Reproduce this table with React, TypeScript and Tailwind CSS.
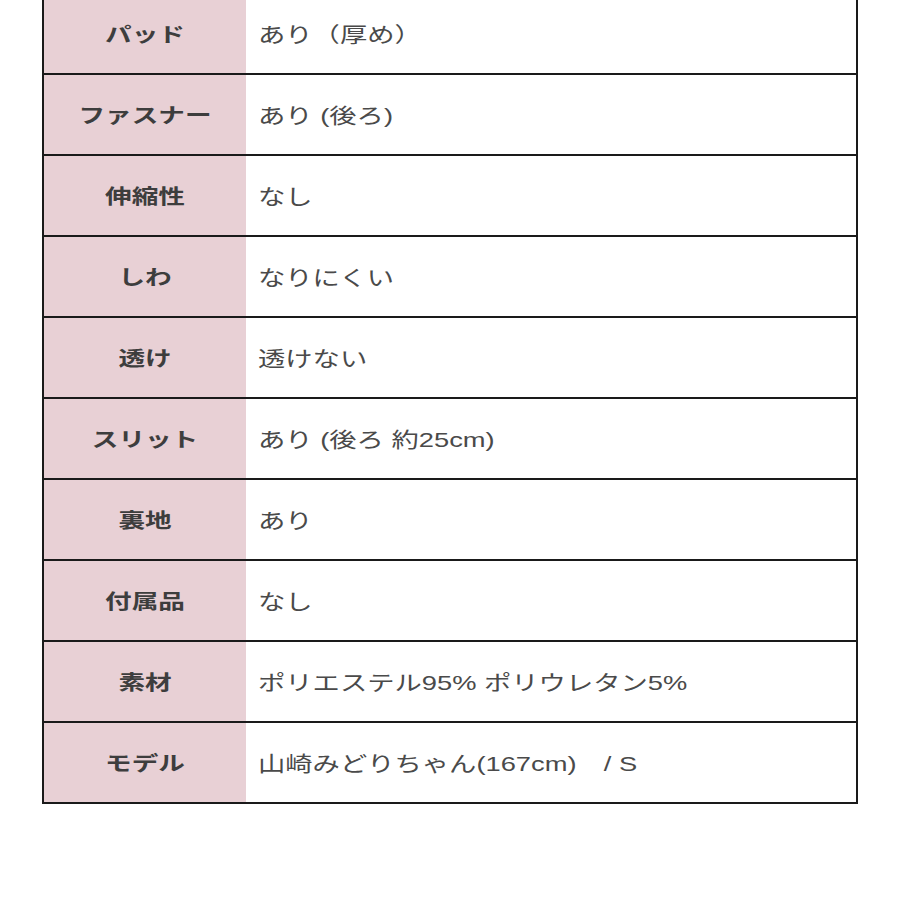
const rows: [string, string][] = [
  ["パッド", "あり（厚め）"],
  ["ファスナー", "あり (後ろ)"],
  ["伸縮性", "なし"],
  ["しわ", "なりにくい"],
  ["透け", "透けない"],
  ["スリット", "あり (後ろ 約25cm)"],
  ["裏地", "あり"],
  ["付属品", "なし"],
  ["素材", "ポリエステル95% ポリウレタン5%"],
  ["モデル", "山崎みどりちゃん(167cm)　/ S"],
]

// the source image is stretched sideways, so glyphs get scale-x
export default function App() {
  return (
    <div className="h-[900px] w-[900px] overflow-hidden bg-white [font-family:'Liberation_Sans','Noto_Sans_CJK_JP',sans-serif]">
      <div className="ml-[42px] -mt-[8px] w-[816px] border-2 border-[#1a1a1a]">
        {rows.map(([label, value], i) => (
          <div
            key={label}
            className={`flex ${i > 0 ? "h-[81px] border-t-2 border-[#1a1a1a]" : "h-[79px]"}`}
          >
            <div className="flex w-[202px] shrink-0 items-center justify-center bg-[#e8d0d5] pt-[3px] text-[20px] font-bold text-[#3d3d3d]">
              <span className="inline-block scale-x-[1.33] whitespace-nowrap">{label}</span>
            </div>
            <div className="flex flex-1 items-center pl-[12px] pt-[3px] text-[21px] text-[#4a4a4a]">
              <span className="inline-block origin-left scale-x-[1.3] whitespace-pre">{value}</span>
            </div>
          </div>
        ))}
      </div>
    </div>
  )
}
